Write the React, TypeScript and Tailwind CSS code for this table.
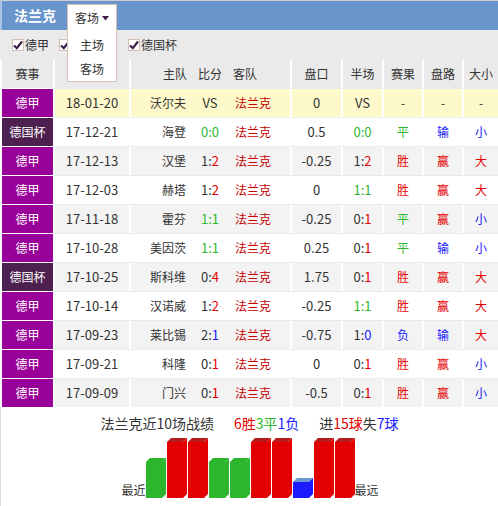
import React from "react";

type Row = {
  league: string;
  date: string;
  home: string;
  score: string;
  handicap: string;
  half: string;
  result: string;
  pan: string;
  size: string;
};

const rows: Row[] = [
  { league: "德甲", date: "18-01-20", home: "沃尔夫", score: "VS", handicap: "0", half: "VS", result: "-", pan: "-", size: "-" },
  { league: "德国杯", date: "17-12-21", home: "海登", score: "0:0", handicap: "0.5", half: "0:0", result: "平", pan: "输", size: "小" },
  { league: "德甲", date: "17-12-13", home: "汉堡", score: "1:2", handicap: "-0.25", half: "1:2", result: "胜", pan: "赢", size: "大" },
  { league: "德甲", date: "17-12-03", home: "赫塔", score: "1:2", handicap: "0", half: "1:1", result: "胜", pan: "赢", size: "大" },
  { league: "德甲", date: "17-11-18", home: "霍芬", score: "1:1", handicap: "-0.25", half: "0:1", result: "平", pan: "赢", size: "小" },
  { league: "德甲", date: "17-10-28", home: "美因茨", score: "1:1", handicap: "0.25", half: "0:1", result: "平", pan: "输", size: "小" },
  { league: "德国杯", date: "17-10-25", home: "斯科维", score: "0:4", handicap: "1.75", half: "0:1", result: "胜", pan: "赢", size: "大" },
  { league: "德甲", date: "17-10-14", home: "汉诺威", score: "1:2", handicap: "-0.25", half: "1:1", result: "胜", pan: "赢", size: "大" },
  { league: "德甲", date: "17-09-23", home: "莱比锡", score: "2:1", handicap: "-0.75", half: "1:0", result: "负", pan: "输", size: "大" },
  { league: "德甲", date: "17-09-21", home: "科隆", score: "0:1", handicap: "0", half: "0:1", result: "胜", pan: "赢", size: "小" },
  { league: "德甲", date: "17-09-09", home: "门兴", score: "0:1", handicap: "-0.5", half: "0:1", result: "胜", pan: "赢", size: "小" },
];

const bars = ["G", "R", "R", "G", "G", "R", "R", "B", "R", "R"];

const font = { fontFamily: '"Noto Sans CJK SC", "Noto Sans", sans-serif' };

const wordColor: Record<string, string> = {
  平: "text-[#2db82d]",
  胜: "text-[#e60000]",
  赢: "text-[#e60000]",
  大: "text-[#e60000]",
  负: "text-[#1a1aff]",
  输: "text-[#1a1aff]",
  小: "text-[#1a1aff]",
};

// away side is 法兰克, so colour its goals by the outcome
const Score = ({ s }: { s: string }) => {
  if (s === "VS") return <span>VS</span>;
  const [h, a] = s.split(":").map(Number);
  if (h === a) return <span className="text-[#2db82d]">{s}</span>;
  return (
    <span>
      {h}:<span className={a > h ? "text-[#e60000]" : "text-[#1a1aff]"}>{a}</span>
    </span>
  );
};

const Check = ({ label, className = "" }: { label: string; className?: string }) => (
  <div className={`flex items-center gap-[1px] ${className}`}>
    <span className="w-[12px] h-[12px] border border-[#d4bfb4] bg-white flex items-center justify-center">
      <svg width="10" height="10" viewBox="0 0 10 10">
        <path d="M1 5.5 L3.8 8.2 L9 1.5" stroke="#3a1f4a" strokeWidth="2.2" fill="none" />
      </svg>
    </span>
    <span>{label}</span>
  </div>
);

const Bar = ({ kind, x }: { kind: string; x: number }) => {
  const h = kind === "R" ? 60 : kind === "G" ? 40 : 20;
  const front = kind === "R" ? "#e30000" : kind === "G" ? "#2db52d" : "#1c1cff";
  const top = kind === "R" ? "#b51c1c" : kind === "G" ? "#2db52d" : "#6b9ad0";
  const y0 = 60 - h;
  return (
    <g>
      <polygon points={`${x},${y0 + 4} ${x + 4},${y0} ${x + 20},${y0} ${x + 16},${y0 + 4}`} fill={top} />
      <polygon points={`${x + 16},${y0 + 4} ${x + 20},${y0} ${x + 20},56 ${x + 16},60`} fill={front} />
      <rect x={x} y={y0 + 4} width={16} height={h - 4} fill={front} />
    </g>
  );
};

export default function App() {
  return (
    <div className="w-[498px] h-[506px] bg-white text-[12px] text-[#333] relative overflow-hidden" style={font}>
      <div className="h-[30px] border-t border-[#cfcfcf] border-l-2 border-l-[#a9c3e3] bg-[#6795cc] flex items-center pl-[12px]">
        <span className="text-white font-bold text-[14px]">法兰克</span>
      </div>

      <div className="absolute left-[67px] top-[4px] w-[50px] h-[78px] bg-white border border-[#d9c3b6] z-10 flex flex-col items-center">
        <div className="h-[25px] flex items-center gap-[3px] pt-[1px]">
          <span>客场</span>
          <svg width="7" height="5" viewBox="0 0 7 5">
            <path d="M0 0 L7 0 L3.5 4.5 Z" fill="#3a1f4a" />
          </svg>
        </div>
        <div className="h-[24px] flex items-end">主场</div>
        <div className="h-[24px] flex items-end">客场</div>
      </div>

      <div className="h-[30px] bg-[#eaeaea] flex items-center pl-[12px] gap-[10px]">
        <Check label="德甲" />
        <Check label="德乙" />
        <Check label="德国杯" className="ml-[22px]" />
      </div>

      <div className="pl-[2px]">
        <div className="grid grid-cols-[51px_76px_63px_36px_62px_51px_41px_40px_40px_36px] h-[28px] bg-[#eaeaea] items-stretch">
          <div className="flex items-center justify-center">赛事</div>
          <div className="border-l-2 border-white"></div>
          <div className="border-l-2 border-white flex items-center justify-end pr-[5px]">主队</div>
          <div className="flex items-center justify-center">比分</div>
          <div className="flex items-center pl-[5px]">客队</div>
          <div className="border-l-2 border-white flex items-center justify-center">盘口</div>
          <div className="border-l-2 border-white flex items-center justify-center">半场</div>
          <div className="border-l-2 border-white flex items-center justify-center">赛果</div>
          <div className="border-l-2 border-white flex items-center justify-center">盘路</div>
          <div className="border-l-2 border-white flex items-center justify-center">大小</div>
        </div>

        {rows.map((r, i) => {
          const bg = i === 0 ? "bg-[#fdf9cb]" : i % 2 === 1 ? "bg-white" : "bg-[#f3f3f3]";
          return (
            <div
              key={i}
              className={`grid grid-cols-[51px_76px_63px_36px_62px_51px_41px_40px_40px_36px] h-[29px] border-t border-[#e6ecf0] ${bg}`}
            >
              <div
                className={`flex items-center justify-center text-white -mt-[1px] border-t border-white ${
                  r.league === "德甲" ? "bg-[#990099]" : "bg-[#4d2050]"
                }`}
              >
                {r.league}
              </div>
              <div className="border-l-2 border-white flex items-center justify-center text-[13px]">{r.date}</div>
              <div className="border-l-2 border-white flex items-center justify-end pr-[6px]">{r.home}</div>
              <div className="flex items-center justify-center text-[13px]">
                <Score s={r.score} />
              </div>
              <div className="flex items-center pl-[7px] text-[#c40000]">法兰克</div>
              <div className="border-l-2 border-white flex items-center justify-center text-[13px]">{r.handicap}</div>
              <div className="border-l-2 border-white flex items-center justify-center text-[13px]">
                <Score s={r.half} />
              </div>
              <div className={`border-l-2 border-white flex items-center justify-center ${wordColor[r.result] ?? ""}`}>{r.result}</div>
              <div className={`border-l-2 border-white flex items-center justify-center ${wordColor[r.pan] ?? ""}`}>{r.pan}</div>
              <div className={`border-l-2 border-white flex items-center justify-center ${wordColor[r.size] ?? ""}`}>{r.size}</div>
            </div>
          );
        })}
      </div>

      <div className="border-l border-[#dcdcdc] h-[99px] flex flex-col items-center">
        <div className="flex items-center h-[30px] text-[14px] pt-[2px] gap-[20px]">
          <span>法兰克近10场战绩</span>
          <span>
            <span className="text-[#e60000]">6胜</span>
            <span className="text-[#2db82d]">3平</span>
            <span className="text-[#1a1aff]">1负</span>
          </span>
          <span>
            进<span className="text-[#e60000]">15球</span>失<span className="text-[#1a1aff]">7球</span>
          </span>
        </div>
        <div className="flex items-end pl-[1px] mt-[1px]">
          <span className="leading-[16px]">最近</span>
          <svg width="210" height="60" viewBox="0 0 210 60" className="block">
            {bars.map((b, i) => (
              <Bar key={i} kind={b} x={i * 21} />
            ))}
          </svg>
          <span className="leading-[16px] -ml-[1px]">最远</span>
        </div>
      </div>
    </div>
  );
}
